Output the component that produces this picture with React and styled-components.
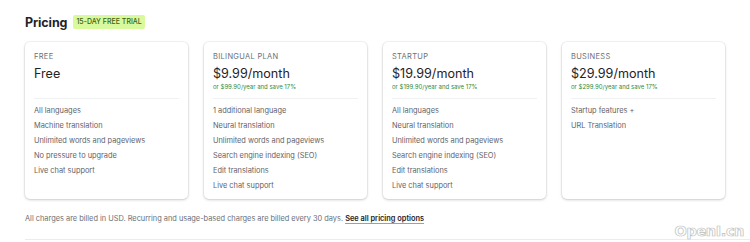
import React from "react";
import styled, { createGlobalStyle } from "styled-components";

const GlobalStyle = createGlobalStyle`
    body {
        margin: 0;
        background: #fff;
        font-family: Inter, "Noto Sans", sans-serif;
        color: #1f2328;
    }
`;

const Page = styled.div`
    position: relative;
    width: 750px;
    height: 242px;
    padding: 13px 23px 0 25px;
    box-sizing: border-box;
    overflow: hidden;
`;

const Header = styled.div`
    display: flex;
    align-items: center;
    gap: 6px;
    height: 18px;
`;

const Title = styled.h2`
    margin: 0;
    font-size: 12.5px;
    font-weight: 700;
    letter-spacing: -0.1px;
`;

const Badge = styled.span`
    background: #d9f99d;
    color: #3f6212;
    font-size: 7px;
    font-weight: 500;
    padding: 2px 3px;
    border-radius: 2px;
    line-height: 10px;
`;

const Cards = styled.div`
    display: grid;
    grid-template-columns: repeat(4, 163px);
    gap: 16px;
    margin-top: 11px;
`;

const Card = styled.div`
    height: 157px;
    border-radius: 5px;
    background: #fff;
    box-shadow: 0 0 0 1px rgba(0, 0, 0, 0.04), 0 1px 3px rgba(0, 0, 0, 0.18);
    padding: 10px 9px 0 9px;
    box-sizing: border-box;
`;

const PlanName = styled.div`
    font-size: 7.5px;
    color: #6b6f76;
    letter-spacing: 0.3px;
    line-height: 10px;
`;

const Price = styled.div`
    font-size: 12.6px;
    color: #1f2328;
    margin-top: 4px;
    line-height: 16px;
`;

const Yearly = styled.div`
    font-size: 6px;
    color: #2f8a3e;
    line-height: 8px;
    height: 8px;
    margin-top: 1px;
`;

const Divider = styled.div`
    height: 1px;
    background: #f0f1f3;
    margin: 7px 0 4px;
`;

const Features = styled.ul`
    list-style: none;
    margin: 0;
    padding: 0;
`;

const Feature = styled.li`
    font-size: 7.4px;
    color: #5f636a;
    line-height: 15px;
`;

const Note = styled.p`
    margin: 15px 0 0;
    font-size: 7.4px;
    color: #6b6f76;
`;

const NoteLink = styled.a`
    color: #1f2328;
    font-weight: 600;
    text-decoration: none;
    border-bottom: 1px solid #9aa0a6;
`;

const Rule = styled.div`
    height: 1px;
    background: #ececec;
    margin-top: 16px;
    margin-right: -23px;
`;

const Watermark = styled.div`
    position: absolute;
    right: 6px;
    bottom: 3px;
    font-family: "DejaVu Sans", sans-serif;
    font-size: 14.5px;
    font-weight: 700;
    color: #fff;
    -webkit-text-stroke: 0.7px #bdbdbd;
    letter-spacing: -0.4px;
`;

const plans = [
    {
        name: "FREE",
        price: "Free",
        features: [
            "All languages",
            "Machine translation",
            "Unlimited words and pageviews",
            "No pressure to upgrade",
            "Live chat support"
        ]
    },
    {
        name: "BILINGUAL PLAN",
        price: "$9.99/month",
        yearly: "or $99.90/year and save 17%",
        features: [
            "1 additional language",
            "Neural translation",
            "Unlimited words and pageviews",
            "Search engine indexing (SEO)",
            "Edit translations",
            "Live chat support"
        ]
    },
    {
        name: "STARTUP",
        price: "$19.99/month",
        yearly: "or $199.90/year and save 17%",
        features: [
            "All languages",
            "Neural translation",
            "Unlimited words and pageviews",
            "Search engine indexing (SEO)",
            "Edit translations",
            "Live chat support"
        ]
    },
    {
        name: "BUSINESS",
        price: "$29.99/month",
        yearly: "or $299.90/year and save 17%",
        features: ["Startup features +", "URL Translation"]
    }
];

export default function App() {
    return (
        <Page>
            <GlobalStyle />
            <Header>
                <Title>Pricing</Title>
                <Badge>15-DAY FREE TRIAL</Badge>
            </Header>
            <Cards>
                {plans.map(plan => (
                    <Card key={plan.name}>
                        <PlanName>{plan.name}</PlanName>
                        <Price>{plan.price}</Price>
                        <Yearly>{plan.yearly}</Yearly>
                        <Divider />
                        <Features>
                            {plan.features.map(f => (
                                <Feature key={f}>{f}</Feature>
                            ))}
                        </Features>
                    </Card>
                ))}
            </Cards>
            <Note>
                All charges are billed in USD. Recurring and usage-based charges are billed every 30 days.{" "}
                <NoteLink href="#">See all pricing options</NoteLink>
            </Note>
            <Rule />
            <Watermark>OpenI.cn</Watermark>
        </Page>
    );
}
